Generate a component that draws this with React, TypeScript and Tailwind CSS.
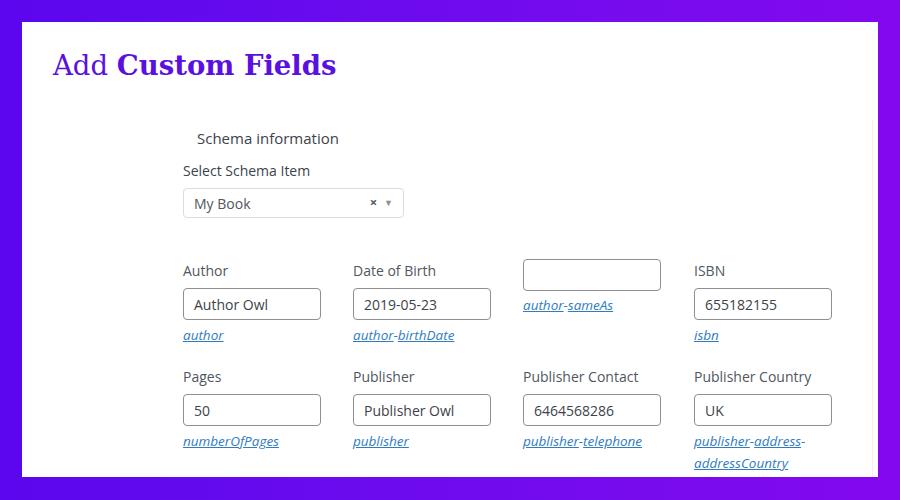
const FIELDS_ROW_1 = [
  { label: "Author", value: "Author Owl", links: ["author"] },
  { label: "Date of Birth", value: "2019-05-23", links: ["author", "birthDate"] },
  { label: "", value: "", links: ["author", "sameAs"] },
  { label: "ISBN", value: "655182155", links: ["isbn"] },
];

const FIELDS_ROW_2 = [
  { label: "Pages", value: "50", links: ["numberOfPages"] },
  { label: "Publisher", value: "Publisher Owl", links: ["publisher"] },
  { label: "Publisher Contact", value: "6464568286", links: ["publisher", "telephone"] },
  { label: "Publisher Country", value: "UK", links: ["publisher", "address", "addressCountry"] },
];

type Field = { label: string; value: string; links: string[] };

function PropLinks({ links }: { links: string[] }) {
  return (
    <div className="text-[13.5px] leading-[22px] italic text-[#2f7cc0] w-[125px]">
      {links.map((l, i) => (
        <span key={l}>
          <span className="underline">{l}</span>
          {i < links.length - 1 && "-"}
        </span>
      ))}
    </div>
  );
}

function FieldCell({ field }: { field: Field }) {
  if (!field.label) {
    return (
      <div className="flex flex-col -mt-[3px]">
        <div className="w-[138px] h-[32px] border border-[#8c8f94] rounded-[4px] bg-white" />
        <div className="mt-[3px]">
          <PropLinks links={field.links} />
        </div>
      </div>
    );
  }
  return (
    <div className="flex flex-col">
      <div className="text-[14px] leading-[18px] text-[#50575e]">{field.label}</div>
      <div className="mt-[8px] w-[138px] h-[32px] border border-[#8c8f94] rounded-[4px] bg-white flex items-center px-[10px] text-[14px] text-[#3c434a]">
        {field.value}
      </div>
      <div className="mt-[4px]">
        <PropLinks links={field.links} />
      </div>
    </div>
  );
}

export default function App() {
  return (
    <div className="w-[900px] h-[500px] bg-linear-to-r from-[#5a06ee] to-[#8308ee] pt-[22px] pl-[22px] overflow-hidden">
      <div
        className="w-[856px] h-[455px] bg-white relative"
        style={{ fontFamily: '"Open Sans", "Noto Sans", sans-serif' }}
      >
        {/* faint edge of the captured admin page */}
        <div className="absolute right-[5px] top-[98px] bottom-0 w-px bg-[#f0f0f1]" />

        <h1
          className="pl-[31px] pt-[25px] text-[27.5px] leading-[36px] text-[#5a10e0]"
          style={{ fontFamily: '"DejaVu Serif", "Liberation Serif", serif' }}
        >
          <span className="font-light">Add </span>
          <span className="font-bold">Custom Fields</span>
        </h1>

        <div className="ml-[161px] mt-[45px]">
          <div className="pl-[14px] text-[15px] leading-[20px] text-[#3c434a]">Schema information</div>
          <div className="mt-[14px] text-[14px] leading-[18px] text-[#3c434a]">Select Schema Item</div>
          <div className="mt-[8px] w-[221px] h-[30px] border border-[#dcdcde] rounded-[4px] flex items-center px-[10px] text-[14px] text-[#50575e]">
            <span className="flex-1">My Book</span>
            <span className="text-[13px] font-bold text-[#50575e] mr-[7px]">×</span>
            <span className="text-[9px] text-[#8c8f94]">▼</span>
          </div>

          <div className="mt-[44px] grid grid-cols-[170px_170px_171px_171px]">
            {FIELDS_ROW_1.map((f, i) => (
              <FieldCell key={i} field={f} />
            ))}
          </div>
          <div className="mt-[22px] grid grid-cols-[170px_170px_171px_171px]">
            {FIELDS_ROW_2.map((f, i) => (
              <FieldCell key={i} field={f} />
            ))}
          </div>
        </div>
      </div>
    </div>
  );
}
